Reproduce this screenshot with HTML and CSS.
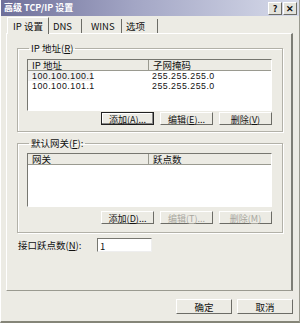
FILE: index.html
```html
<!DOCTYPE html>
<html lang="zh-CN">
<head>
    <meta charset="UTF-8">
    <title>高级 TCP/IP 设置</title>
    <link rel="stylesheet" href="styles.css">
</head>
<body>
    <div class="dialog">
        <div class="titlebar">
            <span class="title">高级 TCP/IP 设置</span>
            <span class="caption-btns">
                <span class="cap-btn">?</span>
                <span class="cap-btn">✕</span>
            </span>
        </div>

        <div class="tabs">
            <span class="tab active">IP 设置</span>
            <span class="tab">DNS</span>
            <span class="tab">WINS</span>
            <span class="tab">选项</span>
        </div>

        <div class="panel">
            <fieldset class="group group-ip">
                <legend>IP 地址(<u>R</u>)</legend>
                <div class="list">
                    <div class="list-head">
                        <span class="col col-a">IP 地址</span>
                        <span class="col">子网掩码</span>
                    </div>
                    <div class="row selected">
                        <span class="col col-a">100.100.100.1</span>
                        <span class="col">255.255.255.0</span>
                    </div>
                    <div class="row">
                        <span class="col col-a">100.100.101.1</span>
                        <span class="col">255.255.255.0</span>
                    </div>
                </div>
                <div class="btn-row">
                    <span class="btn focus">添加(<u>A</u>)...</span>
                    <span class="btn">编辑(<u>E</u>)...</span>
                    <span class="btn">删除(<u>V</u>)</span>
                </div>
            </fieldset>

            <fieldset class="group group-gw">
                <legend>默认网关(<u>F</u>):</legend>
                <div class="list list-gw">
                    <div class="list-head">
                        <span class="col col-a">网关</span>
                        <span class="col">跃点数</span>
                    </div>
                </div>
                <div class="btn-row">
                    <span class="btn">添加(<u>D</u>)...</span>
                    <span class="btn disabled">编辑(<u>T</u>)...</span>
                    <span class="btn disabled">删除(<u>M</u>)</span>
                </div>
            </fieldset>

            <div class="metric">
                <span class="metric-label">接口跃点数(<u>N</u>):</span>
                <span class="input">1</span>
            </div>
        </div>

        <div class="footer">
            <span class="btn btn-wide">确定</span>
            <span class="btn btn-wide">取消</span>
        </div>
    </div>
</body>
</html>
```

FILE: styles.css
```css
body {
    margin: 0;
    padding: 0;
    background: #ecebe4;
    font-family: "Noto Sans CJK SC", "Liberation Sans", sans-serif;
    font-size: 9.5px;
    color: #111;
}
u {
    text-decoration: underline;
}
.dialog {
    width: 300px;
    height: 323px;
    box-sizing: border-box;
    background: #ecebe4;
    border-left: 1px solid #fff;
    border-bottom: 2px solid #858578;
    border-right: 1px solid #9a9a90;
}
.titlebar {
    height: 16px;
    display: flex;
    align-items: center;
    justify-content: space-between;
    padding: 0 2px 0 3px;
    background: linear-gradient(to right, #6f709a, #a3a6c5 45%, #d7dbea);
}
.title {
    color: #fff;
    font-weight: bold;
    font-size: 9px;
    line-height: 16px;
}
.caption-btns {
    display: flex;
    gap: 1px;
}
.cap-btn {
    width: 12px;
    height: 11px;
    line-height: 11px;
    text-align: center;
    font-size: 9px;
    font-weight: bold;
    background: #e4e3dc;
    border-top: 1px solid #fff;
    border-left: 1px solid #fff;
    border-right: 1px solid #6c6c66;
    border-bottom: 1px solid #6c6c66;
}
.tabs {
    display: flex;
    align-items: flex-end;
    height: 16px;
    margin-top: 1px;
    padding-left: 6px;
}
.tab {
    height: 14px;
    line-height: 14px;
    padding: 0 6px 0 4px;
    border-right: 1px solid #6c6c66;
    font-size: 9.5px;
}
.tab.active {
    height: 16px;
    line-height: 16px;
    padding: 0 5px 0 5px;
    border-top: 1px solid #fff;
    border-left: 1px solid #fff;
    margin-bottom: -1px;
    background: #ecebe4;
    position: relative;
    z-index: 1;
}
.tabs .tab:nth-child(2) {
    width: 22px;
}
.tabs .tab:nth-child(3) {
    width: 24px;
    padding-left: 9px;
}
.tabs .tab:nth-child(4) {
    width: 25px;
    padding-left: 4px;
}
.panel {
    margin-left: 5px;
    width: 287px;
    height: 258px;
    box-sizing: border-box;
    border-top: 1px solid #fff;
    border-left: 1px solid #fff;
    border-right: 2px solid #7d7d75;
    border-bottom: 1px solid #9a9a90;
    padding: 9px 0 0 10px;
}
.group {
    margin: 0;
    width: 266px;
    box-sizing: border-box;
    border: 1px solid #b2b1a8;
    box-shadow: 1px 1px 0 #fff, inset 1px 1px 0 #fff;
    padding: 5px 10px 0 9px;
}
.group legend {
    padding: 0 2px;
    margin-left: 2px;
    line-height: 11px;
}
.group-ip {
    height: 89px;
}
.group-gw {
    height: 95px;
    margin-top: 6px;
    padding-top: 4px;
}
.list {
    height: 52px;
    background: #fff;
    border-top: 1px solid #777770;
    border-left: 1px solid #777770;
    border-right: 1px solid #fff;
    border-bottom: 1px solid #fff;
    box-sizing: border-box;
}
.list-gw {
    height: 54px;
}
.list-head {
    display: flex;
    height: 10px;
    line-height: 10px;
    background: #ecebe4;
    border-bottom: 1px solid #9a9a90;
}
.list-head .col-a {
    border-right: 1px solid #9a9a90;
}
.col {
    padding-left: 4px;
}
.col-a {
    width: 116px;
    flex: none;
}
.row {
    display: flex;
    height: 10px;
    line-height: 10px;
    font-family: "Liberation Sans", sans-serif;
    font-size: 8.8px;
    letter-spacing: 0.5px;
}
.row.selected .col-a {
    background: #f0f0f0;
    width: 60px;
    margin-right: 56px;
}
.btn-row {
    display: flex;
    justify-content: flex-end;
    gap: 6px;
    margin-top: 1px;
}
.group-gw .btn-row {
    margin-top: 4px;
}
.btn {
    width: 53px;
    height: 13px;
    line-height: 13px;
    box-sizing: border-box;
    text-align: center;
    font-size: 9px;
    background: #ecebe4;
    border-top: 1px solid #fff;
    border-left: 1px solid #fff;
    border-right: 1px solid #6c6c66;
    border-bottom: 1px solid #6c6c66;
}
.btn.focus {
    border: 1px solid #222;
    box-shadow: inset -1px -1px 0 #888, inset 1px 1px 0 #fff;
}
.btn.disabled {
    color: #a8a79f;
}
.metric {
    display: flex;
    align-items: center;
    margin-top: 5px;
    padding-left: 1px;
}
.metric-label {
    width: 79px;
}
.input {
    width: 55px;
    height: 14px;
    line-height: 14px;
    box-sizing: border-box;
    background: #fff;
    padding-left: 2px;
    border-top: 1px solid #777770;
    border-left: 1px solid #777770;
    border-right: 1px solid #eee;
    border-bottom: 1px solid #eee;
}
.footer {
    display: flex;
    justify-content: flex-end;
    gap: 5px;
    padding: 8px 6px 0 0;
}
.btn-wide {
    width: 56px;
    height: 15px;
    line-height: 15px;
    font-size: 9.5px;
}
```
